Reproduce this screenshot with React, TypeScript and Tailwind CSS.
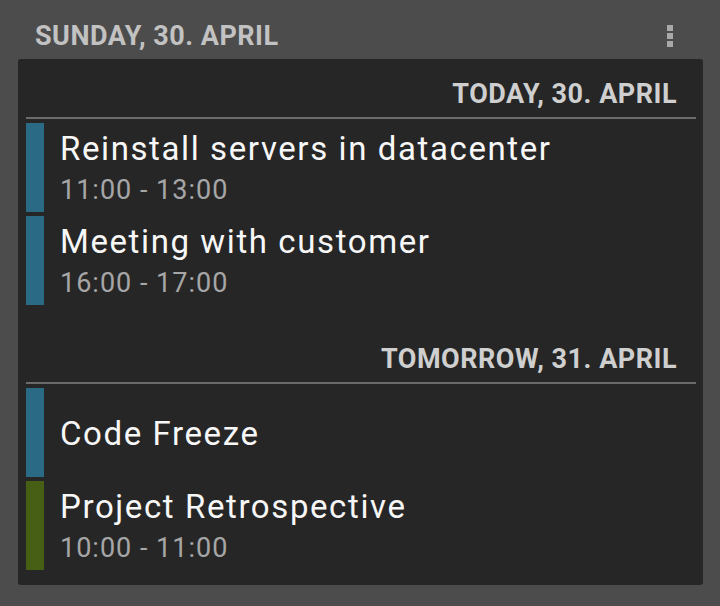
import React from "react"

type Event = {
  title: string
  time?: string
  color: string
}

const days: { label: string; events: Event[] }[] = [
  {
    label: "TODAY, 30. APRIL",
    events: [
      { title: "Reinstall servers in datacenter", time: "11:00 - 13:00", color: "bg-[#2b6a85]" },
      { title: "Meeting with customer", time: "16:00 - 17:00", color: "bg-[#2b6a85]" },
    ],
  },
  {
    label: "TOMORROW, 31. APRIL",
    events: [
      { title: "Code Freeze", color: "bg-[#2b6a85]" },
      { title: "Project Retrospective", time: "10:00 - 11:00", color: "bg-[#465f15]" },
    ],
  },
]

function EventRow({ event }: { event: Event }) {
  return (
    <div className="flex h-[89px]">
      <div className={`w-[18px] shrink-0 ${event.color}`} />
      <div
        className={`flex flex-col pl-[16px] ${
          event.time ? "pt-[10px]" : "justify-center pt-[2px]"
        }`}
      >
        <div className="text-[33px] leading-[32px] tracking-[1.6px] text-[#f7f7f7]">{event.title}</div>
        {event.time && (
          <div className="mt-[12px] text-[27px] leading-[26px] tracking-[1px] text-[#a6a6a6]">
            {event.time}
          </div>
        )}
      </div>
    </div>
  )
}

export default function App() {
  return (
    <div
      className="h-[606px] w-[720px] bg-[#4c4c4c] pt-[20px]"
      style={{ fontFamily: "Roboto, 'Noto Sans', sans-serif" }}
    >
      {/* Header */}
      <div className="flex h-[39px] items-start justify-between pl-[35px] pr-[47px]">
        <div className="text-[27px] font-bold leading-[32px] tracking-[0.5px] text-[#c2c2c2]">
          SUNDAY, 30. APRIL
        </div>
        <div className="mt-[5px] flex flex-col gap-[2px]">
          <div className="h-[6px] w-[6px] bg-[#a8a8a8]" />
          <div className="h-[6px] w-[6px] bg-[#a8a8a8]" />
          <div className="h-[6px] w-[6px] bg-[#a8a8a8]" />
        </div>
      </div>

      {/* Agenda card */}
      <div className="ml-[18px] mr-[17px] rounded-[3px] bg-[#262626] pb-[15px] pl-[8px] pr-[7px]">
        {days.map((day, i) => (
          <div key={day.label} className={i > 0 ? "mt-[19px]" : ""}>
            <div className="flex h-[58px] items-end justify-end pb-[7px] pr-[19px]">
              <div className="text-[27px] font-bold leading-[32px] tracking-[0.5px] text-[#cfcfcf]">
                {day.label}
              </div>
            </div>
            <div className="h-[2px] bg-[#6b6b6b]" />
            <div className="mt-[4px] flex flex-col gap-[4px]">
              {day.events.map((ev) => (
                <EventRow key={ev.title} event={ev} />
              ))}
            </div>
          </div>
        ))}
      </div>
    </div>
  )
}
